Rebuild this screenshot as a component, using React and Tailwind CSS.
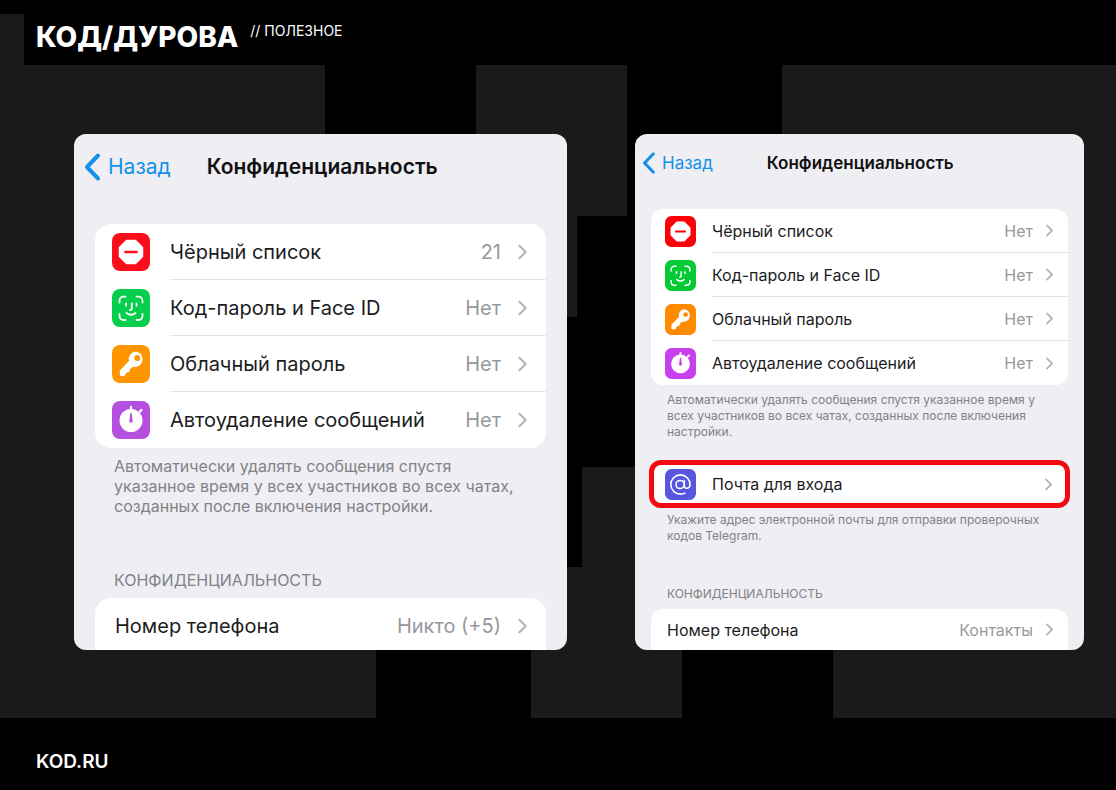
import React from 'react';

const large = {
  card: 'flex-[493]',
  header: 'h-[90px] pt-[17px] pl-[10px]',
  back: 'gap-2 text-[21px] leading-8',
  backIcon: 'w-4 h-7',
  title: 'ml-9 text-[21px] leading-8',
  body: 'px-[21px]',
  group: 'rounded-2xl',
  row: 'h-14',
  icon: 'w-[38px] h-[38px] ml-[17px] mr-5',
  label: 'text-xl',
  plain: 'pl-5 pt-1',
  chevron: 'w-[11px] h-4 ml-4 mr-[18px]',
  note: 'px-[19px] pt-2 text-base leading-5',
  heading: 'px-[19px] pt-[54px] pb-2 text-base leading-5',
  last: 'h-[52px] rounded-t-2xl',
};

const small = {
  card: 'flex-[449]',
  header: 'h-[75px] pt-[13px] pl-[7px]',
  back: 'gap-[7px] text-[17px] leading-8',
  backIcon: 'w-[13px] h-[22px]',
  title: 'ml-[54px] text-[17px] leading-8',
  body: 'px-4',
  group: 'rounded-xl',
  row: 'h-11',
  icon: 'w-[31px] h-[31px] ml-[14px] mr-4',
  label: 'text-base',
  plain: 'pl-4',
  chevron: 'w-[9px] h-[13px] ml-3 mr-[14px]',
  note: 'px-4 pt-[7px] text-xs leading-4',
  heading: 'px-4 pt-[42px] pb-[7px] text-xs leading-4',
  last: 'h-[41px] rounded-t-xl',
};

function BlockIcon({ color, className }) {
  return (
    <svg viewBox="0 0 38 38" className={className}>
      <rect width="38" height="38" rx="8" fill={color} />
      <path d="M14.500 7.500h9l7 7v9l-7 7h-9l-7-7v-9z" fill="#fff" stroke="#fff" strokeWidth="1.500" strokeLinejoin="round" />
      <path d="M13.500 19h11" stroke={color} strokeWidth="2.600" strokeLinecap="round" />
    </svg>
  );
}

function FaceIcon({ color, className }) {
  return (
    <svg viewBox="0 0 38 38" className={className}>
      <rect width="38" height="38" rx="8" fill={color} />
      <g fill="none" stroke="#fff" strokeWidth="1.8" strokeLinecap="round" strokeLinejoin="round">
        <path d="M7.500 13.500v-1.800a4 4 0 0 1 4-4h2M24.500 7.700h2a4 4 0 0 1 4 4v1.800M30.500 25v2a4 4 0 0 1-4 4h-2M13.500 31h-2a4 4 0 0 1-4-4v-2" />
        <path d="M14 14.500v2.200M24.500 14.500v2.200M19.800 14.500v5q0 1.500-1.800 1.500M14.500 24q4.500 3.600 9 0" />
      </g>
    </svg>
  );
}

function KeyIcon({ color, className }) {
  return (
    <svg viewBox="0 0 38 38" className={className}>
      <rect width="38" height="38" rx="8" fill={color} />
      <path d="M24.300 6.500a7.500 7.500 0 0 0-7.300 9.500L8.500 24.800q-.7.700-.7 1.700v3q0 1.500 1.500 1.500h2.400q1.200 0 1.600-1l.9-2.300 2.300-.6q.8-.2 1.100-1l.6-2 3-2.300a7.700 7.700 0 1 0 3.100-15.300z" fill="#fff" />
      <circle cx="25.300" cy="13" r="2.900" fill={color} />
    </svg>
  );
}

function TimerIcon({ color, className }) {
  return (
    <svg viewBox="0 0 38 38" className={className}>
      <rect width="38" height="38" rx="8" fill={color} />
      <circle cx="19" cy="19.500" r="11.500" fill="#fff" />
      <path d="M19 6v4M27.800 10.700l1.600-1.600" stroke="#fff" strokeWidth="2.400" strokeLinecap="round" />
      <path d="M19 12.500l1 7.500a1 1 0 0 1-2 0z" fill={color} stroke={color} strokeWidth="1.400" strokeLinejoin="round" />
    </svg>
  );
}

function MailIcon({ color, className }) {
  return (
    <svg viewBox="0 0 38 38" className={className}>
      <rect width="38" height="38" rx="8" fill={color} />
      <g fill="none" stroke="#fff" strokeWidth="1.9" strokeLinecap="round">
        <circle cx="18.500" cy="19" r="5" />
        <path d="M23.700 14v6.500c0 4.800 7 4 7-1.500A11.800 11.800 0 1 0 19 30.800c2.300 0 4-.5 5.500-1.300" />
      </g>
    </svg>
  );
}

function Chevron({ className }) {
  return (
    <svg viewBox="0 0 12 18" fill="none" className={className}>
      <path d="M2.500 2l7 7-7 7" stroke="#b5b5b9" strokeWidth="2.500" strokeLinecap="round" strokeLinejoin="round" />
    </svg>
  );
}

function Row({ size, item, divider }) {
  const Icon = item.icon;
  return (
    <li>
      <button type="button" className={`flex w-full items-center text-left ${size.row}`}>
        <Icon color={item.color} className={`shrink-0 ${size.icon}`} />
        <span className={`flex h-full min-w-0 flex-1 items-center ${divider ? 'border-b border-[#e4e4e6]' : ''}`}>
          <span className={`flex-1 whitespace-nowrap text-[#1c1c1e] ${size.label}`}>{item.label}</span>
          <span className={`text-[#98989c] ${size.label}`}>{item.value}</span>
          <Chevron className={`shrink-0 ${size.chevron}`} />
        </span>
      </button>
    </li>
  );
}

function PhoneCard({ size, items, note, mail, phone }) {
  return (
    <section className={`min-w-0 overflow-hidden rounded-xl bg-[#efeef3] ${size.card}`}>
      <header className={`flex items-start ${size.header}`}>
        <button type="button" className={`flex items-center text-[#1491ea] ${size.back}`}>
          <svg viewBox="0 0 16 28" fill="none" className={size.backIcon}>
            <path d="M14 2.500L3 14l11 11.500" stroke="currentColor" strokeWidth="4" strokeLinecap="round" strokeLinejoin="round" />
          </svg>
          Назад
        </button>
        <h2 className={`font-semibold text-[#111113] ${size.title}`}>Конфиденциальность</h2>
      </header>

      <div className={size.body}>
        <ul className={`bg-white ${size.group}`}>
          {items.map((item, i) => (
            <Row key={item.label} size={size} item={item} divider={i < items.length - 1} />
          ))}
        </ul>
        <p className={`text-[#828287] ${size.note}`}>{note}</p>

        {mail && (
          <>
            <ul className="-mx-0.5 mt-5 rounded-xl border-5 border-[#f20a10] bg-white">
              <li>
                <button type="button" className="flex h-[38px] w-full items-center pr-3 pl-[11px] text-left">
                  <MailIcon color="#5856e0" className="h-[31px] w-[31px] shrink-0" />
                  <span className="ml-4 flex-1 text-base text-[#1c1c1e]">Почта для входа</span>
                  <Chevron className="h-[13px] w-[9px] shrink-0" />
                </button>
              </li>
            </ul>
            <p className="px-4 pt-1 text-xs leading-4 text-[#828287]">{mail}</p>
          </>
        )}

        <h3 className={`text-[#828287] uppercase ${size.heading}`}>Конфиденциальность</h3>
        <button type="button" className={`flex w-full items-center bg-white text-left ${size.last} ${size.plain}`}>
          <span className={`flex-1 whitespace-nowrap text-[#1c1c1e] ${size.label}`}>Номер телефона</span>
          <span className={`text-[#98989c] ${size.label}`}>{phone}</span>
          <Chevron className={`shrink-0 ${size.chevron}`} />
        </button>
      </div>
    </section>
  );
}

const before = [
  { icon: BlockIcon, color: '#fc0d1b', label: 'Чёрный список', value: '21' },
  { icon: FaceIcon, color: '#06ce4d', label: 'Код-пароль и Face ID', value: 'Нет' },
  { icon: KeyIcon, color: '#ff9500', label: 'Облачный пароль', value: 'Нет' },
  { icon: TimerIcon, color: '#b44fe0', label: 'Автоудаление сообщений', value: 'Нет' },
];

const after = [
  { icon: BlockIcon, color: '#fd0007', label: 'Чёрный список', value: 'Нет' },
  { icon: FaceIcon, color: '#05c935', label: 'Код-пароль и Face ID', value: 'Нет' },
  { icon: KeyIcon, color: '#ff8a00', label: 'Облачный пароль', value: 'Нет' },
  { icon: TimerIcon, color: '#c840ee', label: 'Автоудаление сообщений', value: 'Нет' },
];

function Backdrop() {
  return (
    <svg viewBox="0 0 1116 790" preserveAspectRatio="xMidYMid slice" className="absolute inset-0 -z-10 h-full w-full" aria-hidden="true">
      <path fill="#1a1a1a" d="M0 14h24v51h301v253h51v400H0z" />
      <path fill="#1a1a1a" d="M476 65h151v151h-50v101H476z" />
      <path fill="#1a1a1a" d="M582 467h100v251H531V567h51z" />
      <path fill="#1a1a1a" d="M782 65h334v653H833V318h-51z" />
    </svg>
  );
}

export default function App() {
  return (
    <div className="relative isolate flex min-h-screen flex-col bg-black font-['Inter','Liberation_Sans',sans-serif]">
      <Backdrop />

      <header className="flex items-start gap-2 px-9 pt-[19px] text-white">
        <h1 className="text-[28px] leading-9 font-extrabold whitespace-nowrap">КОД/ДУРОВА</h1>
        <p className="ml-1 text-sm leading-6">// ПОЛЕЗНОЕ</p>
      </header>

      <main className="flex flex-1 items-start gap-[68px] pt-[79px] pr-8 pl-[74px]">
        <PhoneCard
          size={large}
          items={before}
          note="Автоматически удалять сообщения спустя указанное время у всех участников во всех чатах, созданных после включения настройки."
          phone="Никто (+5)"
        />
        <PhoneCard
          size={small}
          items={after}
          note="Автоматически удалять сообщения спустя указанное время у всех участников во всех чатах, созданных после включения настройки."
          mail="Укажите адрес электронной почты для отправки проверочных кодов Telegram."
          phone="Контакты"
        />
      </main>

      <footer className="px-9 pb-4">
        <a href="https://kod.ru" className="text-[19px] leading-6 font-semibold text-white">KOD.RU</a>
      </footer>
    </div>
  );
}
